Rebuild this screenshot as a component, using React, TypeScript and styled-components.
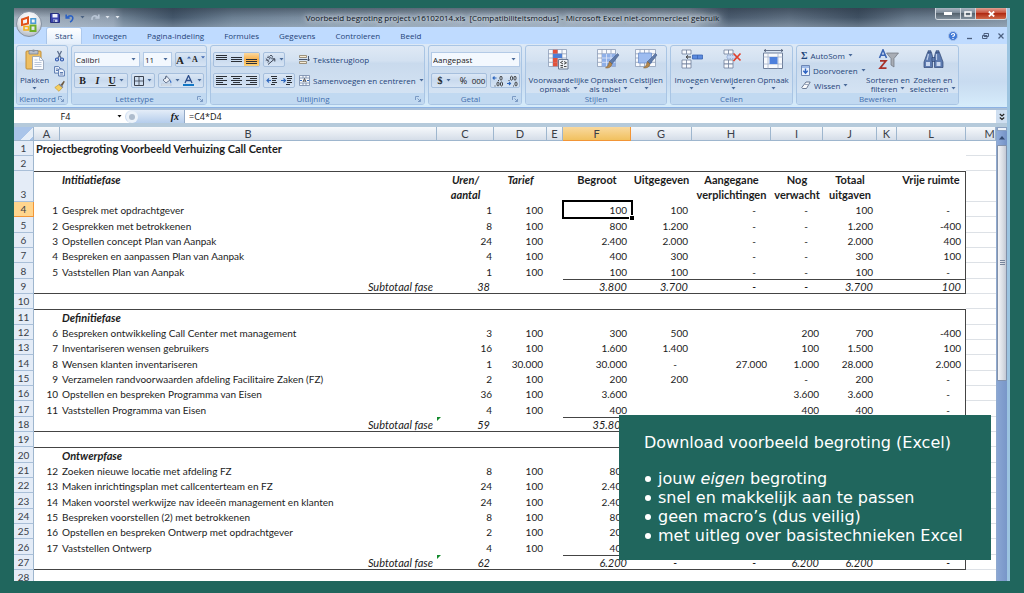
import React from 'react';
import styled, { createGlobalStyle, css } from 'styled-components';

const UI = `'Open Sans', 'Noto Sans', sans-serif`;
const SHEET = `Lato, 'Liberation Sans', sans-serif`;
const TEAL = '#20665d';
const INK = '#1f4479';

const Global = createGlobalStyle`
  *, *::before, *::after { box-sizing: border-box; }
  body { margin: 0; background: ${TEAL}; }
  button, input, select { font: inherit; color: inherit; margin: 0; padding: 0; border: 0; background: none; border-radius: 0; outline: none; }
  svg { display: block; flex: none; }
`;

/* ---------- frame ---------- */

const Page = styled.div`
  position: relative;
  display: flex;
  height: 100vh;
  padding: 8px 14px 12px;
  background: ${TEAL};
  font: 8px/12px ${UI};
  color: ${INK};
`;

const Window = styled.main`
  position: relative;
  display: flex;
  flex: 1;
  flex-direction: column;
  min-width: 0;
  border-right: 3px solid #9cc4e0;
  background: #c3dcf5;
`;

const TitleBar = styled.header`
  display: flex;
  align-items: center;
  height: 19px;
  padding-left: 36px;
  background:
    linear-gradient(180deg, rgba(40, 52, 66, 0.5), rgba(60, 76, 92, 0) 50%, rgba(200, 216, 232, 0.3)),
    linear-gradient(90deg, #a3b0bd 0, #8e9dae 10%, #6d8092 11%, #43566a 16%, #6b7f92 22%, #788b9e 28%, #8fa0b0 45%, #8d9dad 68%, #4a5b6e 72%, #5d6e80 78%, #3f5062 85%, #66788a 90%, #7b8c9d 100%);
`;

const QuickBar = styled.div`
  display: flex;
  align-items: center;
  gap: 5px;
  width: 90px;
`;

const Title = styled.h1`
  flex: 1;
  margin: 0;
  padding-right: 50px;
  overflow: hidden;
  font-size: 8px;
  line-height: 18px;
  font-weight: 400;
  text-align: center;
  white-space: pre;
  color: #0d131b;
  text-shadow: 0 0 4px #dfe6ee, 0 0 6px #dfe6ee, 0 0 8px #cfd8e2;
`;

const WindowButtons = styled.div`
  display: flex;
  align-self: flex-start;
  height: 12px;
  border: 1px solid #d3dae1;
  border-top: 0;
  border-radius: 0 0 3px 3px;
  overflow: hidden;
`;

const WindowButton = styled.button<{ $w: number; $close?: boolean }>`
  display: grid;
  place-items: center;
  width: ${p => p.$w}px;
  border-left: 1px solid #cfd6dd;
  background: ${p => (p.$close
    ? 'linear-gradient(#e0a094, #c8513a 45%, #b02a12 50%, #d0694a)'
    : 'linear-gradient(#a9b5c1, #7b8997 45%, #56646f 50%, #7f8e9b)')};
  &:first-child { border-left: 0; }
`;

const Orb = styled.button`
  position: absolute;
  z-index: 2;
  top: 3px;
  left: 2px;
  display: grid;
  place-items: center;
  width: 26px;
  height: 26px;
  border: 1px solid #8793a3;
  border-radius: 50%;
  background: radial-gradient(circle at 50% 30%, #fff 0, #e8eaee 45%, #a9b1bd 90%);
`;

const TabBar = styled.nav`
  display: flex;
  height: 17px;
  padding: 1px 3px 0 31px;
  background: #bfdbff;
`;

const Tab = styled.button<{ $on?: boolean }>`
  height: 16px;
  padding: ${p => (p.$on ? '0 8px' : '0 10px')};
  margin: ${p => (p.$on ? '0 2px' : '0')};
  line-height: 16px;
  border-radius: 2px 2px 0 0;
  ${p => p.$on && css`
    background: linear-gradient(#fdfeff, #e3eefb);
    box-shadow: 0 0 0 1px #a9c6ea;
    clip-path: inset(-1px -1px 0 -1px);
  `}
`;

const TabTools = styled.div`
  display: flex;
  align-items: center;
  gap: 9px;
  margin-left: auto;
`;

/* ---------- ribbon ---------- */

const Ribbon = styled.section`
  display: flex;
  gap: 3px;
  height: 64px;
  padding: 1px 2px 2px;
  border-bottom: 1px solid #8db2e3;
  background: linear-gradient(#dde9f6, #c8dbf0 60%, #d6ecfb);
`;

const GroupBox = styled.section<{ $w: number }>`
  display: flex;
  flex-direction: column;
  flex: none;
  width: ${p => p.$w}px;
  border: 1px solid #a9c5e4;
  border-radius: 3px;
  background: linear-gradient(#dfe9f5, #d3e1f1 25%, #c9daed 30%, #d8e6f5);
  overflow: hidden;
`;

const GroupBody = styled.div`
  display: flex;
  flex: 1;
  padding: 0 2px;
`;

const GroupLabel = styled.footer`
  display: flex;
  align-items: center;
  height: 11px;
  background: #c1d9f1;
  color: #4470ae;
  line-height: 11px;
  h2 { flex: 1; margin: 0; font: inherit; text-align: center; }
  button { margin-right: 3px; }
`;

const Stack = styled.div`
  display: flex;
  flex-direction: column;
  gap: 6px;
  padding-top: 6px;
`;

const Line = styled.div`
  display: flex;
  align-items: center;
  gap: 3px;
  height: 15px;
`;

const Cluster = styled.div`
  display: flex;
  height: 15px;
  border: 1px solid #a6bfdd;
  border-radius: 2px;
  background: linear-gradient(#dbe7f5, #c9daee 50%, #d6e4f4);
  overflow: hidden;
`;

const Tool = styled.button<{ $w?: number; $on?: boolean }>`
  display: flex;
  align-items: center;
  justify-content: center;
  gap: 3px;
  width: ${p => p.$w ?? 15}px;
  color: #222;
  background: ${p => (p.$on ? 'linear-gradient(#fbd9a0, #f8b04a 50%, #fbd27a)' : 'none')};
`;

const Glyph = styled.span<{ $italic?: boolean; $underline?: boolean; $size?: number; $serif?: boolean }>`
  font-family: ${p => (p.$serif ? `'Liberation Serif', serif` : UI)};
  font-size: ${p => p.$size ?? 10}px;
  font-weight: ${p => (p.$serif ? 700 : 400)};
  font-style: ${p => (p.$italic ? 'italic' : 'normal')};
  text-decoration: ${p => (p.$underline ? 'underline' : 'none')};
`;

const Picker = styled.label<{ $w: number }>`
  position: relative;
  display: block;
  width: ${p => p.$w}px;
  height: 15px;
  border: 1px solid #b3cae6;
  background: #f3f8fe;
  color: #222;
  select { appearance: none; width: 100%; height: 13px; padding-left: 1px; line-height: 13px; }
  svg { position: absolute; top: 5px; right: 3px; pointer-events: none; }
`;

const BigButton = styled.button<{ $w: number }>`
  display: flex;
  flex-direction: column;
  align-items: center;
  width: ${p => p.$w}px;
  padding-top: 3px;
  line-height: 9px;
  white-space: nowrap;
  > svg:first-child { margin-bottom: 5px; }
`;

const Sub = styled.span`
  display: flex;
  align-items: center;
  gap: 3px;
  height: 9px;
`;

const TextButton = styled.button`
  display: flex;
  align-items: center;
  gap: 3px;
  height: 15px;
  white-space: nowrap;
`;

const IconColumn = styled.div`
  display: flex;
  flex-direction: column;
  gap: 3px;
  padding: 4px 0 0 4px;
`;

const Rule = styled.div`
  width: 1px;
  margin: 4px 3px 3px 1px;
  background: #a9c0dc;
`;

/* ---------- formula bar ---------- */

const FormulaBar = styled.div`
  display: flex;
  height: 19px;
  border-top: 2px solid #a9bfd8;
  border-bottom: 4px solid #b5cadb;
  background: #fff;
  color: #111;
  font: 9px/13px ${UI};
`;

const NameBox = styled.div`
  display: flex;
  align-items: center;
  width: 111px;
  padding-right: 3px;
  input { flex: 1; min-width: 0; height: 13px; text-align: center; }
`;

const FxArea = styled.div`
  display: flex;
  align-items: center;
  justify-content: space-between;
  width: 60px;
  padding: 0 5px 0 4px;
  border-radius: 7px 0 0 7px;
  border-right: 1px solid #93a9c6;
  background: linear-gradient(#e4edf8, #b5cdec);
`;

const Knob = styled.span`
  width: 6px;
  height: 6px;
  border-radius: 50%;
  background: #aebccd;
  box-shadow: 0 0 0 3px #edf3fa;
`;

const FormulaInput = styled.input`
  flex: 1;
  min-width: 0;
  height: 13px;
  && { padding-left: 4px; }
`;

const Expand = styled.button`
  display: grid;
  place-items: center;
  width: 11px;
  background: #cfdff1;
  color: #111;
`;

/* ---------- sheet ---------- */

const SheetArea = styled.div`
  display: flex;
  flex: 1;
  min-height: 0;
  background: #fff;
`;

const GridClip = styled.div`
  flex: 1;
  min-width: 0;
  overflow: hidden;
`;

const Grid = styled.table`
  width: 100%;
  table-layout: fixed;
  border-spacing: 0;
  font: 10px/14px ${SHEET};
  color: #1c1c1c;
  tbody tr { height: 15px; }
  tbody tr:nth-child(3n + 5) { height: 16px; }
`;

const ColHead = styled.th<{ $on?: boolean; $last?: boolean; $corner?: boolean }>`
  height: 14px;
  padding: 0 0 0 ${p => (p.$last ? 18 : 0)}px;
  font-size: 11px;
  font-weight: 400;
  line-height: 13px;
  color: #3a4048;
  border-right: 1px solid ${p => (p.$on ? '#f29536' : '#9eb6ce')};
  border-bottom: 1px solid ${p => (p.$on ? '#f29536' : '#9eb6ce')};
  background: ${p => (p.$on
    ? 'linear-gradient(#f9d99f, #f1c15f)'
    : p.$corner
      ? 'linear-gradient(135deg, #a9c4e9 0 62%, #e6eef8 62% 90%, #a9c4e9 90%)'
      : 'linear-gradient(#f6f9fc, #d5dde8)')};
`;

const RowHead = styled.th<{ $on?: boolean }>`
  padding: 0;
  vertical-align: bottom;
  font-weight: 400;
  color: #3a4048;
  border-right: 1px solid ${p => (p.$on ? '#f29536' : '#9eb6ce')};
  border-bottom: 1px solid ${p => (p.$on ? '#f29536' : '#a9bfd8')};
  background: ${p => (p.$on ? '#ffd58d' : '#e4ecf7')};
`;

type Edge = { $top?: boolean; $bottom?: boolean; $right?: boolean };

const Cell = styled.td<Edge & {
  $align?: 'left' | 'right' | 'center';
  $pad?: number;
  $bold?: boolean;
  $italic?: boolean;
  $head?: boolean;
  $grid?: boolean;
}>`
  position: relative;
  padding: 0;
  padding-${p => (p.$align === 'left' ? 'left' : 'right')}: ${p => p.$pad ?? 0}px;
  text-align: ${p => p.$align ?? 'right'};
  vertical-align: ${p => (p.$head ? 'top' : 'bottom')};
  line-height: ${p => (p.$head ? 15 : p.$bottom ? 13 : 14)}px;
  font-size: ${p => (p.$bold || p.$italic ? 11 : 10)}px;
  font-weight: ${p => (p.$bold ? 700 : 400)};
  font-style: ${p => (p.$italic ? 'italic' : 'normal')};
  white-space: nowrap;
  ${p => p.$top && 'border-top: 1px solid #444;'}
  ${p => p.$bottom && 'border-bottom: 1px solid #444;'}
  ${p => p.$right && 'border-right: 1px solid #444;'}
  ${p => p.$grid && 'border-bottom: 1px solid #dde1e6;'}
`;

const Selection = styled.span`
  position: absolute;
  inset: -2px -2px -2px -1px;
  border: 2px solid #000;
  &::after {
    content: '';
    position: absolute;
    right: -3px;
    bottom: -3px;
    width: 4px;
    height: 4px;
    background: #000;
    outline: 1px solid #fff;
  }
`;

const Flag = styled.span`
  position: absolute;
  top: 0;
  left: 0;
  border: 2px solid transparent;
  border-top-color: #128a2c;
  border-left-color: #128a2c;
`;

const ScrollBar = styled.div`
  display: flex;
  flex-direction: column;
  width: 11px;
  border-left: 1px solid #8fa9cf;
  background: linear-gradient(90deg, #8aa6d3, #7896c8);
`;

const SplitHandle = styled.div`
  height: 4px;
  border: 1px solid #8aa0c0;
  background: #eef3fa;
`;

const ScrollUp = styled.button`
  display: grid;
  place-items: center;
  height: 14px;
  background: linear-gradient(90deg, #8fabd9, #7492c6);
`;

const Thumb = styled.div`
  display: grid;
  place-items: center;
  height: 52%;
  border: 1px solid #8291aa;
  border-radius: 1px;
  background: linear-gradient(90deg, #f4f5f8, #d9dde4 60%, #c3c9d4);
`;

/* ---------- call-out ---------- */

const Callout = styled.aside`
  position: absolute;
  right: 33px;
  bottom: 33px;
  width: 372px;
  padding: 18px 0 15px 25px;
  background: ${TEAL};
  color: #fff;
  font: 16px/19px 'DejaVu Sans', sans-serif;
  white-space: nowrap;
  p { margin: 0 0 17px; }
  ul { margin: 0; padding: 0 0 0 1px; list-style: none; }
  li { display: flex; align-items: center; gap: 7px; }
  li::before { content: ''; width: 6px; height: 6px; border-radius: 50%; background: #fff; }
`;

/* ---------- icons ---------- */

const Arrow = ({ color = '#4a6a99' }: { color?: string }) => (
  <svg width="5" height="3" viewBox="0 0 5 3"><path d="M.5 0h4L2.5 2.6z" fill={color} /></svg>
);

const Launcher = () => (
  <svg width="6" height="6" viewBox="0 0 6 6" fill="none" stroke="#7b9ac4">
    <path d="M.5 4V.5H4M2.5 2.5l3 3M5.500 3v2.500H3" />
  </svg>
);

const OfficeLogo = () => (
  <svg width="18" height="18" viewBox="0 0 18 18" fill="none" strokeWidth="2">
    <path d="M2 4.500 8 2.500v6L2 10z" stroke="#e2541b" />
    <path d="M11 3.800h4.500v4.500H11z" stroke="#4a9ad4" strokeWidth="1.600" />
    <path d="M4 11.500h4.500V15H4z" stroke="#f2b01e" strokeWidth="1.600" />
    <path d="M10.500 10.500h5V16h-5z" stroke="#6fae2c" />
  </svg>
);

const SaveIcon = () => (
  <svg width="10" height="10" viewBox="0 0 10 10">
    <path d="M.5.500h8l1 1v8h-9z" fill="#3b44ad" stroke="#26307e" />
    <path d="M2.500 1h5v3.500h-5z" fill="#eef1fb" /><path d="M3 6.500h4.500V9H3z" fill="#c9cfee" /><path d="M3.500 7h1.200v2H3.500z" fill="#26307e" />
  </svg>
);

const UndoIcon = ({ flip, color }: { flip?: boolean; color: string }) => (
  <svg width="10" height="10" viewBox="0 0 10 10" fill="none" stroke={color} strokeWidth="1.600">
    <path d={flip ? 'M8 4.500C5 1.500 1.500 3 2 7M8.800 1.500V5H5.300' : 'M2 4.500C5 1.500 9 3 7.500 6.500 7 8 6 8.600 5 9M1.200 1.500V5h3.500'} />
  </svg>
);

const PasteIcon = () => (
  <svg width="20" height="21" viewBox="0 0 20 21">
    <rect x="1" y="2" width="15" height="18" rx="1" fill="#eebf62" stroke="#c28d34" />
    <path d="M4 1.500h9V5H4z" fill="#b9bfc9" stroke="#747d8c" strokeWidth=".7" />
    <circle cx="8.500" cy="1.800" r="1.300" fill="#8b94a3" />
    <path d="M7.500 7.500h7l4 4v9h-11z" fill="#fbfcfe" stroke="#8f9db3" strokeWidth=".8" />
    <path d="M14.500 7.500v4h4M9.500 11h3M9.500 13.500h7M9.500 15.500h7M9.500 17.500h7" fill="none" stroke="#a9b8cf" strokeWidth=".8" />
  </svg>
);

const CutIcon = () => (
  <svg width="11" height="12" viewBox="0 0 11 12" fill="none">
    <path d="M3.500 1l3.500 7M7.500 1 4 8" stroke="#5d6f8d" strokeWidth="1.300" />
    <circle cx="3" cy="9.500" r="1.500" stroke="#2d55ad" strokeWidth="1.200" /><circle cx="8" cy="9.500" r="1.500" stroke="#2d55ad" strokeWidth="1.200" />
  </svg>
);

const CopyIcon = () => (
  <svg width="11" height="12" viewBox="0 0 11 12" fill="#eff5fd" stroke="#4c6ea8" strokeWidth=".9">
    <path d="M.6 1.600h4l1.500 1.500v5H.6z" /><path d="M4.600 4h3.800l2 2v5H4.600z" /><path d="M6 7.500h3M6 9h3M2 4h2M2 5.500h2" />
  </svg>
);

const BrushIcon = () => (
  <svg width="11" height="12" viewBox="0 0 11 12">
    <path d="M6.500 5 9.800.8l1 1L8 6.500z" fill="#6d5a41" /><path d="M.8 7.500l4.200-3 3.500 3L5 11.300z" fill="#f5cf62" stroke="#c79b2f" strokeWidth=".7" />
    <path d="M5 4l4 3.500" stroke="#7784a0" strokeWidth="1.200" />
  </svg>
);

const GrowIcon = ({ small }: { small?: boolean }) => (
  <svg width="4" height="8" viewBox="0 0 4 8"><path d={small ? 'M0 .3h4L2 2.600z' : 'M0 2.600h4L2 .3z'} fill="#4169b0" /></svg>
);

const BorderIcon = () => (
  <svg width="10" height="10" viewBox="0 0 10 10" fill="none" stroke="#3b4250">
    <path d="M.5.500h9v9h-9z" /><path d="M5 1v8M1 5h8" strokeWidth=".8" />
  </svg>
);

const FillIcon = () => (
  <svg width="11" height="11" viewBox="0 0 11 11">
    <path d="M2 5l4-3.500 3 3.500-4 3z" fill="#e8edf5" stroke="#54627c" strokeWidth=".8" /><path d="M4.500 4V1.500Q5.500 0 6 2" fill="none" stroke="#54627c" strokeWidth=".8" />
    <path d="M9 4.500q2 2 1 4-1.500-1-1-4" fill="#3c71c4" /><path d="M0 9h10v2H0z" fill="#dfe6ee" stroke="#9aa8bd" strokeWidth=".4" />
  </svg>
);

const FontColorIcon = () => (
  <svg width="11" height="11" viewBox="0 0 11 11">
    <path d="M2 8 5.500.5 9 8M3.300 5.500h4.400" fill="none" stroke="#2c4d8a" strokeWidth="1.300" /><path d="M0 9h11v2H0z" fill="#1276c4" />
  </svg>
);

const BarsIcon = ({ rows, x = 0 }: { rows: [number, number][]; x?: number }) => (
  <svg width="11" height="11" viewBox="0 0 11 11" stroke="#2b2f36" strokeWidth="1">
    {rows.map(([y, w]) => <path key={y} d={`M${x === 1 ? (11 - w) / 2 : x === 2 ? 11 - w : 0} ${y}.500h${w}`} />)}
  </svg>
);

const OrientIcon = () => (
  <svg width="11" height="10" viewBox="0 0 11 10" fill="none" stroke="#3a4252" strokeWidth="1">
    <path d="M3 9.500 9.500 4M9.800 6.500V3.800H7.200" />
    <path d="M.8 3.500l3.400 3M2 2.500a1.300 1.300 0 0 1 2 2M3.500.800l3.500 3.500M5 .8a1.300 1.300 0 0 1 2 2M.8 5.500a1.200 1.200 0 0 1 2 2" strokeWidth=".9" />
  </svg>
);

const IndentIcon = ({ right }: { right?: boolean }) => (
  <svg width="12" height="11" viewBox="0 0 12 11" fill="none">
    <path d="M5 1.500h6M6 3.500h5M6 5.500h4M6 7.500h5M5 9.500h4" stroke="#2b2f36" />
    <path d={right ? 'M0 5.500h4M2.500 3.500l2 2-2 2' : 'M1 5.500h4M3 3.500l-2 2 2 2'} stroke="#2f67bd" strokeWidth="1.100" />
  </svg>
);

const WrapIcon = () => (
  <svg width="11" height="11" viewBox="0 0 11 11" fill="none">
    <path d="M.5 1.500h7v2h-7zM.5 7.500h7v2h-7z" fill="#f7ecd6" stroke="#8a7c62" strokeWidth=".8" />
    <path d="M0 5.500h8M9.500 2v5M8.500 5.500l1 1.500 1-1.500" stroke="#46556f" />
  </svg>
);

const MergeIcon = () => (
  <svg width="11" height="11" viewBox="0 0 11 11" fill="none">
    <path d="M.5.500h10v10H.5zM.5 3h10M.5 8h10M4 .5V3M7 .5V3M4 8v2.500M7 8v2.500" fill="#f4f8fd" stroke="#7388a8" strokeWidth=".8" />
    <path d="M1 5.500h2M10 5.500H8" stroke="#2f67bd" /><path d="M4 7l1.500-3.500L7 7M4.500 6h2" stroke="#333" strokeWidth=".8" />
  </svg>
);

const DecimalIcon = ({ less }: { less?: boolean }) => (
  <svg width="12" height="12" viewBox="0 0 12 12" fill="none" stroke="#333" strokeWidth=".9">
    <path d={less ? 'M1 8.500h3.500M3 7l1.500 1.500L3 10' : 'M4.500 3H1M2.500 1.500 1 3l1.500 1.500'} stroke="#2f67bd" strokeWidth="1.100" />
    {less ? (
      <g><path d="M3 5v1M7.500 10.500v1" /><ellipse cx="5.500" cy="3.200" rx="1.100" ry="2" /><ellipse cx="9" cy="3.200" rx="1.100" ry="2" /><ellipse cx="10" cy="9" rx="1.100" ry="2" /></g>
    ) : (
      <g><path d="M6.500 5v1M3 10.500v1" /><ellipse cx="9" cy="3.200" rx="1.100" ry="2" /><ellipse cx="6" cy="9" rx="1.100" ry="2" /><ellipse cx="9.500" cy="9" rx="1.100" ry="2" /></g>
    )}
  </svg>
);

const Mesh = ({ w = 18, h = 17 }: { w?: number; h?: number }) => (
  <path d={`M.5.500h${w}v${h}H.5zM.5 4.800h${w}M.5 9h${w}M.5 13.300h${w}M5 .5v${h}M9.500 .5v${h}M14 .5v${h}`} fill="#f8fafd" stroke="#8d9db8" strokeWidth=".8" />
);

const Brush = () => (
  <g><path d="M20.500 4.500 22 6l-7 9-2.500-2.500z" fill="#5e7aa8" stroke="#3c5580" strokeWidth=".5" /><path d="M12.500 12.500 15 15q-1 4.500-6.500 4 2.500-1.500 4-6.500" fill="#b4874c" stroke="#7a5626" strokeWidth=".5" /></g>
);

const ConditionalIcon = () => (
  <svg width="21" height="21" viewBox="0 0 21 21">
    <Mesh /><path d="M5 .8h4.500v4H5zM5 9h4.500v4.300H5z" fill="#e2523c" /><path d="M5 4.800h9V9H5z" fill="#4e7fd4" /><path d="M5 13.300h4.500v4H5z" fill="#e2523c" />
    <path d="M10.500 10.500h9.500v9.500h-9.500z" fill="#eef1f6" stroke="#6b7a93" /><path d="M15 12l-2.500 1.500L15 15M12.500 16.500h2.500M16 12.500l2.500 1.300-2.500 1.400M12.500 18.300h2.500M16 17.500h2.500" fill="none" stroke="#333" strokeWidth=".9" />
  </svg>
);

const TableStyleIcon = () => (
  <svg width="23" height="21" viewBox="0 0 23 21">
    <Mesh /><path d="M5 4.800h13.500v12.700H5z" fill="#8fb0e8" /><path d="M5 9h13.500M5 13.300h13.500M9.500 4.800v12.700M14 4.800v12.700" stroke="#dfe9fa" strokeWidth=".8" /><Brush />
  </svg>
);

const CellStyleIcon = () => (
  <svg width="23" height="21" viewBox="0 0 23 21"><Mesh w={20} /><path d="M3.500 4h13v10h-13z" fill="#9dbcf0" stroke="#6d8fcc" strokeWidth=".8" /><Brush /></svg>
);

const Trio = ({ y }: { y: number }) => (
  <path d={`M1 ${y}h9v4H1zM5.500 ${y}v4`} fill="#f8fafd" stroke="#6f7f9b" strokeWidth=".8" />
);

const InsertIcon = () => (
  <svg width="22" height="21" viewBox="0 0 22 21">
    <Trio y={1} /><Trio y={11} /><Trio y={15} /><path d="M11.500 6h10v4h-10z" fill="#5b8ade" stroke="#3a64b4" strokeWidth=".8" /><path d="M16.500 6v4" stroke="#3a64b4" strokeWidth=".8" />
    <path d="M5 8h5M7 6.300 5.200 8 7 9.700" fill="none" stroke="#333" />
  </svg>
);

const DeleteIcon = () => (
  <svg width="20" height="21" viewBox="0 0 20 21">
    <Trio y={1} /><Trio y={11} /><Trio y={15} /><path d="M4 6.300h9v3.500H4z" fill="#c6d8f5" stroke="#7d98c8" strokeWidth=".8" strokeDasharray="1.500 1" />
    <path d="M10.500 4.500l7 7M17.500 4.500l-7 7.500" stroke="#e0402c" strokeWidth="1.700" fill="none" />
  </svg>
);

const FormatIcon = () => (
  <svg width="23" height="21" viewBox="0 0 23 21">
    <path d="M2 1.500h19M4 .3 2 1.500 4 2.700M19 .3l2 1.200-2 1.200" stroke="#4a5872" strokeWidth=".8" fill="none" />
    <path d="M1.500 4h19v15.500h-19z" fill="#f8fafd" stroke="#6f7f9b" /><path d="M6 4v15.500M16 4v15.500M1.500 8h19M1.500 15h19" stroke="#a3b2ca" strokeWidth=".8" /><path d="M7.500 8h8v7h-8z" fill="#4e80dc" />
  </svg>
);

const FillDownIcon = () => (
  <svg width="9" height="11" viewBox="0 0 9 11"><path d="M.5.500h8v10h-8z" fill="#e9f1fc" stroke="#6d87b4" /><path d="M1 1h7v2H1z" fill="#9fbbe8" /><path d="M4.500 3.500v4M2.300 5.800l2.200 2.400 2.200-2.400" fill="none" stroke="#2e63c2" strokeWidth="1.400" /></svg>
);

const EraserIcon = () => (
  <svg width="10" height="9" viewBox="0 0 10 9"><path d="M.8 6.500 5 1h4.200L5.500 7.500H1.500z" fill="#fafbfd" stroke="#5f6e89" strokeWidth=".9" /><path d="M3.200 3.500h4.200" stroke="#9aa7bd" /></svg>
);

const SortIcon = () => (
  <svg width="21" height="21" viewBox="0 0 21 21" fill="none">
    <path d="M8.500 4h12l-4.500 5.500v8.500l-3-2V9.500z" fill="#a8adb5" stroke="#6d737d" strokeWidth=".7" />
    <path d="M1.500 9 5 .8 8.500 9M2.800 6.300h4.400" stroke="#3c66b4" strokeWidth="1.600" /><path d="M2 11.800h6L2 19.200h6.500" stroke="#a8322b" strokeWidth="1.700" />
  </svg>
);

const FindIcon = () => (
  <svg width="21" height="21" viewBox="0 0 21 21" fill="#5d7bb0" stroke="#2f4674" strokeWidth=".7">
    <path d="M4.500 3.500h4l1 4v11H1V13z" /><path d="M16.500 3.500h-4l-1 4v11H20V13z" /><path d="M9 8.500h3v4H9z" /><path d="M5 1.800h3v2H5zM13 1.800h3v2h-3z" />
    <path d="M3 13h4v4H3zM13.500 13h4v4h-4z" fill="#c9d8f0" stroke="none" /><path d="M5.500 5l-1.500 6M13.500 5v6" stroke="#bccde9" strokeWidth="1.200" />
  </svg>
);

const HelpIcon = () => (
  <svg width="10" height="10" viewBox="0 0 10 10"><circle cx="5" cy="5" r="4.500" fill="#3f78d6" stroke="#a9c2e8" /><path d="M3.500 4q0-1.500 1.600-1.500T6.500 4Q6.400 5 5 5.300V6M5 7v1" fill="none" stroke="#fff" strokeWidth="1.200" /></svg>
);

/* ---------- data ---------- */

type Kind = 'title' | 'blank' | 'head' | 'task' | 'total';
type Row = { kind: Kind; id?: string; name?: string; c?: string[]; flag?: boolean; tall?: boolean };

/* c holds the columns C, D, F, G, H, I, J, L */
const t = (id: number, name: string, ...c: string[]): Row => ({ kind: 'task', id: String(id), name, c });
const total = (flag: boolean, ...c: string[]): Row => ({ kind: 'total', name: 'Subtotaal fase', c, flag });

const rows: Row[] = [
  { kind: 'title', name: 'Projectbegroting Voorbeeld Verhuizing Call Center' },
  { kind: 'blank' },
  { kind: 'head', name: 'Intitiatiefase', tall: true, c: ['Uren/\naantal', 'Tarief', 'Begroot', 'Uitgegeven', 'Aangegane\nverplichtingen', 'Nog\nverwacht', 'Totaal\nuitgaven', 'Vrije ruimte'] },
  t(1, 'Gesprek met opdrachtgever', '1', '100', '100', '100', '-', '-', '100', '-'),
  t(2, 'Gesprekken met betrokkenen', '8', '100', '800', '1.200', '-', '-', '1.200', '-400'),
  t(3, 'Opstellen concept Plan van Aanpak', '24', '100', '2.400', '2.000', '-', '-', '2.000', '400'),
  t(4, 'Bespreken en aanpassen Plan van Aanpak', '4', '100', '400', '300', '-', '-', '300', '100'),
  t(5, 'Vaststellen Plan van Aanpak', '1', '100', '100', '100', '-', '-', '100', '-'),
  total(false, '38', '', '3.800', '3.700', '-', '-', '3.700', '100'),
  { kind: 'blank' },
  { kind: 'head', name: 'Definitiefase' },
  t(6, 'Bespreken ontwikkeling Call Center met management', '3', '100', '300', '500', '', '200', '700', '-400'),
  t(7, 'Inventariseren wensen gebruikers', '16', '100', '1.600', '1.400', '', '100', '1.500', '100'),
  t(8, 'Wensen klanten inventariseren', '1', '30.000', '30.000', '-', '27.000', '1.000', '28.000', '2.000'),
  t(9, 'Verzamelen randvoorwaarden afdeling Facilitaire Zaken (FZ)', '2', '100', '200', '200', '', '-', '200', '-'),
  t(10, 'Opstellen en bespreken Programma van Eisen', '36', '100', '3.600', '', '', '3.600', '3.600', '-'),
  t(11, 'Vaststellen Programma van Eisen', '4', '100', '400', '', '', '400', '400', '-'),
  total(true, '59', '', '35.800', '', '', '', '', ''),
  { kind: 'blank' },
  { kind: 'head', name: 'Ontwerpfase' },
  t(12, 'Zoeken nieuwe locatie met afdeling FZ', '8', '100', '800', '', '', '', '', ''),
  t(13, 'Maken inrichtingsplan met callcenterteam en FZ', '24', '100', '2.400', '', '', '', '', ''),
  t(14, 'Maken voorstel werkwijze nav ideeën management en klanten', '24', '100', '2.400', '', '', '', '', ''),
  t(15, 'Bespreken voorstellen (2) met betrokkenen', '8', '100', '800', '', '', '', '', ''),
  t(16, 'Opstellen en bespreken Ontwerp met opdrachtgever', '2', '100', '200', '', '', '', '', ''),
  t(17, 'Vaststellen Ontwerp', '4', '100', '400', '', '', '', '', ''),
  total(true, '62', '', '6.200', '-', '-', '6.200', '6.200', '-'),
  { kind: 'blank' },
];

const columns: [string, number | undefined][] = [
  ['', 20], ['A', 26], ['B', undefined], ['C', 57], ['D', 53], ['E', 16], ['F', 68], ['G', 61],
  ['H', 79], ['I', 52], ['J', 54], ['K', 20], ['L', 69], ['M', 30],
];

const letters = ['C', 'D', 'E', 'F', 'G', 'H', 'I', 'J', 'K', 'L'];
const valueIndex: Record<string, number> = { C: 0, D: 1, F: 2, G: 3, H: 4, I: 5, J: 6, L: 7 };

const SheetRow = ({ row, n }: { row: Row; n: number }) => {
  const top = row.kind === 'head';
  const bottom = row.kind === 'total';
  const inside = row.kind === 'head' || row.kind === 'task' || row.kind === 'total';
  const head = row.kind === 'head';
  return (
    <tr>
      <RowHead scope="row" $on={n === 4}>{n}</RowHead>
      {row.kind === 'title' ? (
        <Cell colSpan={2} $align="left" $pad={2} $bold>{row.name}</Cell>
      ) : (
        <>
          <Cell $pad={2} $top={top} $bottom={bottom}>{row.id}</Cell>
          <Cell
            $align={row.kind === 'total' ? 'right' : 'left'}
            $pad={row.kind === 'total' ? 4 : 2}
            $bold={head}
            $italic={head || row.kind === 'total'}
            $head={row.tall}
            $top={top}
            $bottom={bottom}
          >
            {row.name}
          </Cell>
        </>
      )}
      {letters.map(l => {
        const value = row.c?.[valueIndex[l]] ?? '';
        const sum = row.kind === 'total' && !'CDE'.includes(l);
        const pad = head ? 0 : value === '-' ? 15 : l === 'C' && row.kind === 'task' ? 2 : 4;
        return (
          <Cell
            key={l}
            $align={head ? 'center' : 'right'}
            $pad={pad}
            $bold={head}
            $italic={row.kind === 'total' || (head && (l === 'C' || l === 'D'))}
            $head={row.tall}
            $top={top || sum}
            $bottom={bottom}
            $right={inside && l === 'L'}
          >
            {value.split('\n').map((s, i) => <React.Fragment key={s}>{i > 0 && <br />}{s}</React.Fragment>)}
            {l === 'F' && n === 4 && <Selection />}
            {l === 'C' && row.flag && <Flag />}
          </Cell>
        );
      })}
      <Cell $grid />
    </tr>
  );
};

/* ---------- parts ---------- */

const Group = ({ w, label, launch, children }: { w: number; label: string; launch?: boolean; children: React.ReactNode }) => (
  <GroupBox $w={w}>
    <GroupBody>{children}</GroupBody>
    <GroupLabel><h2>{label}</h2>{launch && <button aria-label={`${label} opties`}><Launcher /></button>}</GroupLabel>
  </GroupBox>
);

const Big = ({ w, icon, top, sub }: { w: number; icon: React.ReactNode; top: string; sub?: string }) => (
  <BigButton $w={w}>{icon}<span>{top}</span><Sub>{sub}<Arrow /></Sub></BigButton>
);

const Combo = ({ w, label, value }: { w: number; label: string; value: string }) => (
  <Picker $w={w}><select aria-label={label} defaultValue={value}><option>{value}</option></select><Arrow /></Picker>
);

const EditTools = styled.div`
  display: flex;
  flex-direction: column;
  width: 66px;
  padding: 2px 0 0 2px;
`;

export default function App() {
  return (
    <Page>
      <Global />
      <Window>
        <Orb aria-label="Office-knop"><OfficeLogo /></Orb>
        <TitleBar>
          <QuickBar>
            <button aria-label="Opslaan"><SaveIcon /></button>
            <button aria-label="Ongedaan maken"><UndoIcon color="#2c62c4" /></button>
            <Arrow color="#4c6383" />
            <button aria-label="Opnieuw"><UndoIcon flip color="#b9c6d6" /></button>
            <Arrow color="#dfe5ec" />
            <Arrow color="#e6ebf1" />
          </QuickBar>
          <Title>Voorbeeld begroting project v16102014.xls  [Compatibiliteitsmodus] - Microsoft Excel niet-commercieel gebruik</Title>
          <WindowButtons>
            <WindowButton $w={24} aria-label="Minimaliseren"><svg width="8" height="4"><path d="M0 0h8v3H0z" fill="#fff" /></svg></WindowButton>
            <WindowButton $w={15} aria-label="Maximaliseren"><svg width="8" height="6"><path d="M1 1h6v4H1z" fill="none" stroke="#fff" strokeWidth="1.500" /></svg></WindowButton>
            <WindowButton $w={31} $close aria-label="Sluiten"><svg width="7" height="6"><path d="M.8.500l5.400 5M6.200.500l-5.400 5" stroke="#fff" strokeWidth="1.800" /></svg></WindowButton>
          </WindowButtons>
        </TitleBar>

        <TabBar>
          {['Start', 'Invoegen', 'Pagina-indeling', 'Formules', 'Gegevens', 'Controleren', 'Beeld'].map((name, i) => (
            <Tab key={name} $on={i === 0}>{name}</Tab>
          ))}
          <TabTools>
            <button aria-label="Help"><HelpIcon /></button>
            <button aria-label="Werkmap minimaliseren"><svg width="6" height="7"><path d="M0 5.500h5" stroke="#4b5f7f" strokeWidth="1.300" /></svg></button>
            <button aria-label="Werkmap herstellen"><svg width="7" height="6"><path d="M2 .5h4.500v3H2zM.5 2.500H5v3H.5z" fill="#bfdbff" stroke="#4b5f7f" /></svg></button>
            <button aria-label="Werkmap sluiten"><svg width="6" height="6"><path d="M.5.500l5 5M5.500.500l-5 5" stroke="#4b5f7f" strokeWidth="1.200" /></svg></button>
          </TabTools>
        </TabBar>

        <Ribbon>
          <Group w={52} label="Klembord" launch>
            <Big w={32} icon={<PasteIcon />} top="Plakken" />
            <IconColumn>
              <button aria-label="Knippen"><CutIcon /></button>
              <button aria-label="Kopiëren"><CopyIcon /></button>
              <button aria-label="Opmaak kopiëren"><BrushIcon /></button>
            </IconColumn>
          </Group>

          <Group w={136} label="Lettertype" launch>
            <Stack>
              <Line>
                <Combo w={66} label="Lettertype" value="Calibri" />
                <Combo w={29} label="Tekengrootte" value="11" />
                <Cluster>
                  <Tool aria-label="Groter"><Glyph $serif $size={11}>A</Glyph><GrowIcon /></Tool>
                  <Tool aria-label="Kleiner"><Glyph $serif $size={8}>A</Glyph><GrowIcon small /></Tool>
                </Cluster>
              </Line>
              <Line>
                <Cluster>
                  <Tool aria-label="Vet"><Glyph $serif>B</Glyph></Tool>
                  <Tool aria-label="Cursief"><Glyph $serif $italic>I</Glyph></Tool>
                  <Tool $w={22} aria-label="Onderstrepen"><Glyph $serif $underline>U</Glyph><Arrow /></Tool>
                </Cluster>
                <Cluster><Tool $w={22} aria-label="Randen"><BorderIcon /><Arrow /></Tool></Cluster>
                <Cluster>
                  <Tool $w={22} aria-label="Opvulkleur"><FillIcon /><Arrow /></Tool>
                  <Tool $w={22} aria-label="Tekstkleur"><FontColorIcon /><Arrow /></Tool>
                </Cluster>
              </Line>
            </Stack>
          </Group>

          <Group w={215} label="Uitlijning" launch>
            <Stack>
              <Line>
                <Cluster>
                  <Tool aria-label="Boven"><BarsIcon rows={[[1, 11], [3, 11], [5, 11]]} /></Tool>
                  <Tool aria-label="Midden"><BarsIcon rows={[[3, 11], [5, 11], [7, 11]]} /></Tool>
                  <Tool $on aria-label="Onder"><BarsIcon rows={[[5, 11], [7, 11], [9, 11]]} /></Tool>
                </Cluster>
                <Cluster><Tool $w={20} aria-label="Afdrukstand"><OrientIcon /><Arrow /></Tool></Cluster>
              </Line>
              <Line>
                <Cluster>
                  <Tool aria-label="Links"><BarsIcon rows={[[1, 11], [3, 7], [5, 11], [7, 7], [9, 11]]} /></Tool>
                  <Tool aria-label="Centreren"><BarsIcon x={1} rows={[[1, 11], [3, 7], [5, 11], [7, 7], [9, 11]]} /></Tool>
                  <Tool aria-label="Rechts"><BarsIcon x={2} rows={[[1, 11], [3, 7], [5, 11], [7, 7], [9, 11]]} /></Tool>
                </Cluster>
                <Cluster>
                  <Tool aria-label="Inspringing verkleinen"><IndentIcon /></Tool>
                  <Tool aria-label="Inspringing vergroten"><IndentIcon right /></Tool>
                </Cluster>
              </Line>
            </Stack>
            <Rule />
            <Stack>
              <TextButton><WrapIcon />Tekstterugloop</TextButton>
              <TextButton><MergeIcon />Samenvoegen en centreren<Arrow /></TextButton>
            </Stack>
          </Group>

          <Group w={94} label="Getal" launch>
            <Stack>
              <Combo w={89} label="Getalnotatie" value="Aangepast" />
              <Line>
                <Cluster>
                  <Tool $w={24} aria-label="Valuta"><Glyph $serif>$</Glyph><Arrow /></Tool>
                  <Tool aria-label="Procent"><Glyph $size={9}>%</Glyph></Tool>
                  <Tool aria-label="Duizendtallen"><Glyph $size={8}>000</Glyph></Tool>
                </Cluster>
                <Cluster>
                  <Tool $w={14} aria-label="Meer decimalen"><DecimalIcon /></Tool>
                  <Tool $w={14} aria-label="Minder decimalen"><DecimalIcon less /></Tool>
                </Cluster>
              </Line>
            </Stack>
          </Group>

          <Group w={142} label="Stijlen">
            <Big w={62} icon={<ConditionalIcon />} top="Voorwaardelijke" sub="opmaak" />
            <Big w={39} icon={<TableStyleIcon />} top="Opmaken" sub="als tabel" />
            <Big w={36} icon={<CellStyleIcon />} top="Celstijlen" />
          </Group>

          <Group w={123} label="Cellen">
            <Big w={37} icon={<InsertIcon />} top="Invoegen" />
            <Big w={46} icon={<DeleteIcon />} top="Verwijderen" />
            <Big w={34} icon={<FormatIcon />} top="Opmaak" />
          </Group>

          <Group w={163} label="Bewerken">
            <EditTools>
              <TextButton><Glyph $serif>Σ</Glyph>AutoSom<Arrow /></TextButton>
              <TextButton><FillDownIcon />Doorvoeren<Arrow /></TextButton>
              <TextButton><EraserIcon />Wissen<Arrow /></TextButton>
            </EditTools>
            <Big w={46} icon={<SortIcon />} top="Sorteren en" sub="filteren" />
            <Big w={44} icon={<FindIcon />} top="Zoeken en" sub="selecteren" />
          </Group>
        </Ribbon>

        <FormulaBar>
          <NameBox><input aria-label="Naamvak" defaultValue="F4" /><Arrow color="#111" /></NameBox>
          <FxArea><Knob /><Glyph $serif $italic>fx</Glyph></FxArea>
          <FormulaInput aria-label="Formule" defaultValue="=C4*D4" />
          <Expand aria-label="Formulebalk uitvouwen">
            <svg width="6" height="8" fill="none" stroke="#222" strokeWidth="1.200"><path d="M.8 1 3 3l2.200-2M.8 4.500 3 6.500l2.200-2" /></svg>
          </Expand>
        </FormulaBar>

        <SheetArea>
          <GridClip>
            <Grid>
              <colgroup>{columns.map(([name, w]) => <col key={name} width={w} />)}</colgroup>
              <thead>
                <tr>
                  {columns.map(([name]) => (
                    <ColHead key={name} scope="col" $on={name === 'F'} $last={name === 'M'} $corner={name === ''}>{name}</ColHead>
                  ))}
                </tr>
              </thead>
              <tbody>{rows.map((row, i) => <SheetRow key={i} row={row} n={i + 1} />)}</tbody>
            </Grid>
          </GridClip>
          <ScrollBar>
            <SplitHandle />
            <ScrollUp aria-label="Omhoog"><svg width="6" height="4"><path d="M0 3.500h6L3 0z" fill="#33496f" /></svg></ScrollUp>
            <Thumb><svg width="5" height="6" stroke="#77849b"><path d="M0 .5h5M0 2.500h5M0 4.500h5" /></svg></Thumb>
          </ScrollBar>
        </SheetArea>
      </Window>

      <Callout>
        <p>Download voorbeeld begroting (Excel)</p>
        <ul>
          <li><span>jouw <em>eigen</em> begroting</span></li>
          <li>snel en makkelijk aan te passen</li>
          <li>geen macro’s (dus veilig)</li>
          <li>met uitleg over basistechnieken Excel</li>
        </ul>
      </Callout>
    </Page>
  );
}
